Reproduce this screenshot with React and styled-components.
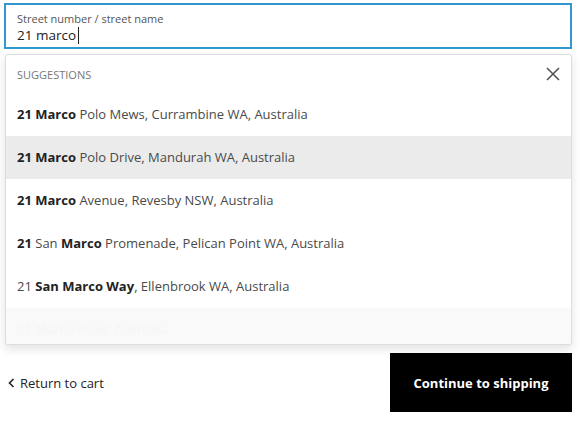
import React from 'react'
import styled, { createGlobalStyle } from 'styled-components'

const GlobalStyle = createGlobalStyle`
  html, body {
    margin: 0;
    padding: 0;
    background: #fff;
    font-family: "Open Sans", "Noto Sans", Arial, sans-serif;
  }
`

const Page = styled.div`
  width: 580px;
  padding: 3px 8px 0 4px;
  box-sizing: border-box;
  display: flex;
  flex-direction: column;
`

const Field = styled.label`
  display: flex;
  flex-direction: column;
  height: 46px;
  box-sizing: border-box;
  border: 2px solid #3296d0;
  padding: 6px 11px 0 11px;
`

const FieldLabel = styled.span`
  font-size: 11px;
  line-height: 15px;
  color: #555;
`

const FieldValue = styled.span`
  font-size: 13.5px;
  line-height: 18px;
  color: #222;
  display: flex;
  align-items: center;
`

const Caret = styled.span`
  display: inline-block;
  width: 1px;
  height: 17px;
  background: #222;
  margin-left: 2px;
`

const Dropdown = styled.div`
  margin: 5px 0 0 1px;
  height: 289px;
  overflow: hidden;
  background: #fff;
  border: 1px solid #ddd;
  border-radius: 3px;
  box-shadow: 0 4px 10px rgba(0, 0, 0, 0.12);
  display: flex;
  flex-direction: column;
`

const Header = styled.div`
  height: 38px;
  flex-shrink: 0;
  display: flex;
  align-items: center;
  justify-content: space-between;
  padding: 0 8px 0 11px;
`

const HeaderTitle = styled.span`
  font-size: 11px;
  color: #777;
`

const CloseButton = styled.button`
  border: none;
  background: none;
  padding: 0;
  width: 20px;
  height: 20px;
  display: flex;
  align-items: center;
  justify-content: center;
  cursor: pointer;
`

const Row = styled.div`
  height: 43px;
  box-sizing: border-box;
  flex-shrink: 0;
  display: flex;
  align-items: center;
  padding: 0 11px 2px 11px;
  font-size: 13px;
  color: ${p => (p.$faded ? '#f6f6f6' : '#4a4a4a')};
  background: ${p => (p.$active ? '#ebebeb' : p.$faded ? '#f9f9f9' : '#fff')};
  white-space: pre;

  b {
    font-weight: 700;
    color: ${p => (p.$faded ? '#f6f6f6' : '#222')};
  }
`

const Footer = styled.div`
  margin-top: 8px;
  display: flex;
  align-items: center;
  justify-content: space-between;
`

const BackLink = styled.a`
  display: flex;
  align-items: center;
  gap: 5px;
  padding-left: 4px;
  font-size: 13px;
  color: #222;
  text-decoration: none;
`

const PrimaryButton = styled.button`
  width: 182px;
  height: 59px;
  border: none;
  background: #000;
  color: #fff;
  font-family: inherit;
  font-size: 13px;
  font-weight: 700;
  cursor: pointer;
`

const suggestions = [
  [['21 Marco', true], [' Polo Mews, Currambine WA, Australia', false]],
  [['21 Marco', true], [' Polo Drive, Mandurah WA, Australia', false]],
  [['21 Marco', true], [' Avenue, Revesby NSW, Australia', false]],
  [['21', true], [' San ', false], ['Marco', true], [' Promenade, Pelican Point WA, Australia', false]],
  [['21 ', false], ['San Marco Way', true], [', Ellenbrook WA, Australia', false]],
]

function App () {
  return (
    <>
      <GlobalStyle />
      <Page>
        <Field>
          <FieldLabel>Street number / street name</FieldLabel>
          <FieldValue>21 marco<Caret /></FieldValue>
        </Field>

        <Dropdown>
          <Header>
            <HeaderTitle>SUGGESTIONS</HeaderTitle>
            <CloseButton aria-label="Close">
              <svg width="14" height="14" viewBox="0 0 14 14">
                <path d="M1 1L13 13M13 1L1 13" stroke="#555" strokeWidth="1.6" fill="none" />
              </svg>
            </CloseButton>
          </Header>
          {suggestions.map((parts, i) => (
            <Row key={i} $active={i === 1}>
              {parts.map(([text, bold], j) => (bold ? <b key={j}>{text}</b> : <span key={j}>{text}</span>))}
            </Row>
          ))}
          <Row $faded>
            <span>21 Marco Road, Australia</span>
          </Row>
        </Dropdown>

        <Footer>
          <BackLink href="#">
            <svg width="7" height="10" viewBox="0 0 7 10">
              <path d="M5.5 1L1.5 5L5.5 9" stroke="#222" strokeWidth="1.6" fill="none" />
            </svg>
            Return to cart
          </BackLink>
          <PrimaryButton>Continue to shipping</PrimaryButton>
        </Footer>
      </Page>
    </>
  )
}

export default App
